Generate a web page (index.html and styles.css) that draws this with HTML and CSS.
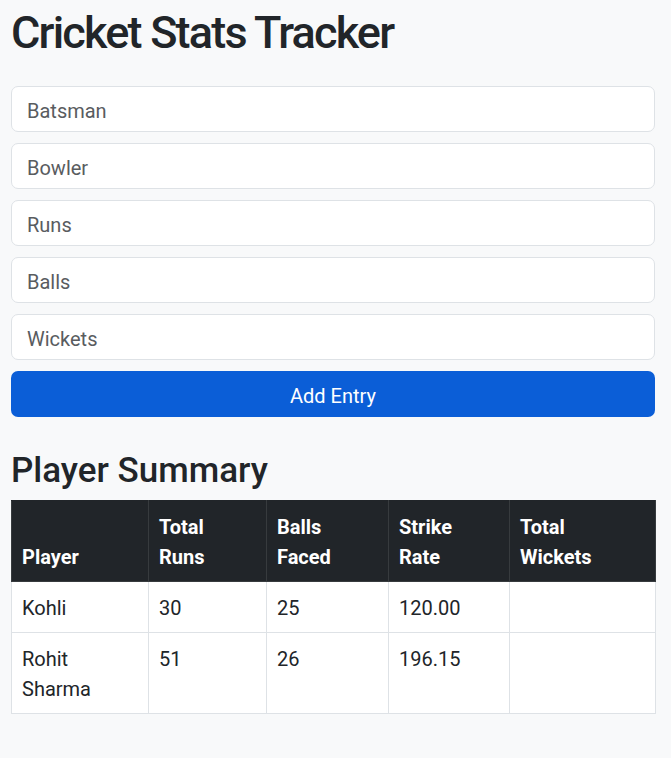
FILE: index.html
```html
<!DOCTYPE html>
<html lang="en">
<head>
<meta charset="utf-8">
<title>Cricket Stats Tracker</title>
<link rel="stylesheet" href="styles.css">
</head>
<body>
<main class="page">
  <h1 class="title">Cricket Stats Tracker</h1>
  <form class="entry-form">
    <input class="field" type="text" placeholder="Batsman">
    <input class="field" type="text" placeholder="Bowler">
    <input class="field" type="number" placeholder="Runs">
    <input class="field" type="number" placeholder="Balls">
    <input class="field" type="number" placeholder="Wickets">
    <button class="add-btn" type="button">Add Entry</button>
  </form>
  <h2 class="subtitle">Player Summary</h2>
  <table class="summary">
    <colgroup>
      <col class="c1"><col class="c2"><col class="c3"><col class="c4"><col class="c5">
    </colgroup>
    <thead>
      <tr><th>Player</th><th>Total<br>Runs</th><th>Balls<br>Faced</th><th>Strike<br>Rate</th><th>Total<br>Wickets</th></tr>
    </thead>
    <tbody>
      <tr><td>Kohli</td><td>30</td><td>25</td><td>120.00</td><td></td></tr>
      <tr><td>Rohit<br>Sharma</td><td>51</td><td>26</td><td>196.15</td><td></td></tr>
    </tbody>
  </table>
</main>
</body>
</html>
```

FILE: styles.css
```css
* { box-sizing: border-box; }
html, body { margin: 0; padding: 0; }
body {
  background: #f8f9fa;
  color: #212529;
  font-family: Roboto, "Open Sans", sans-serif;
  font-size: 20px;
  line-height: 30px;
}
.page {
  padding: 0 16px 40px 11px;
}
.title {
  margin: 3px 0 23px;
  font-size: 45px;
  line-height: 60px;
  font-weight: 500;
  letter-spacing: -1.8px;
}
.entry-form {
  display: flex;
  flex-direction: column;
  gap: 11px;
}
.field {
  height: 46px;
  border: 1px solid #dee2e6;
  border-radius: 7px;
  background: #fff;
  padding: 3px 15px 0;
  font: inherit;
  color: #212529;
}
.field::placeholder { color: #595c5f; }
.add-btn {
  height: 46px;
  border: 0;
  border-radius: 7px;
  background: #0b5ed7;
  color: #fff;
  font: inherit;
  padding: 4px 0 0;
}
.subtitle {
  margin: 32px 0 8px;
  font-size: 35px;
  line-height: 43px;
  font-weight: 500;
}
.summary {
  width: 644px;
  border-collapse: collapse;
  table-layout: fixed;
  background: #fff;
}
.c1 { width: 137px; }
.c2 { width: 118px; }
.c3 { width: 122px; }
.c4 { width: 121px; }
.c5 { width: 146px; }
.summary th, .summary td {
  padding: 11px 10px 9px;
  text-align: left;
  border: 1px solid #dee2e6;
}
.summary th {
  background: #212529;
  color: #fff;
  font-weight: 700;
  vertical-align: bottom;
  border-color: #373b3e;
  border-top-color: #212529;
}
.summary td { vertical-align: top; }
```
